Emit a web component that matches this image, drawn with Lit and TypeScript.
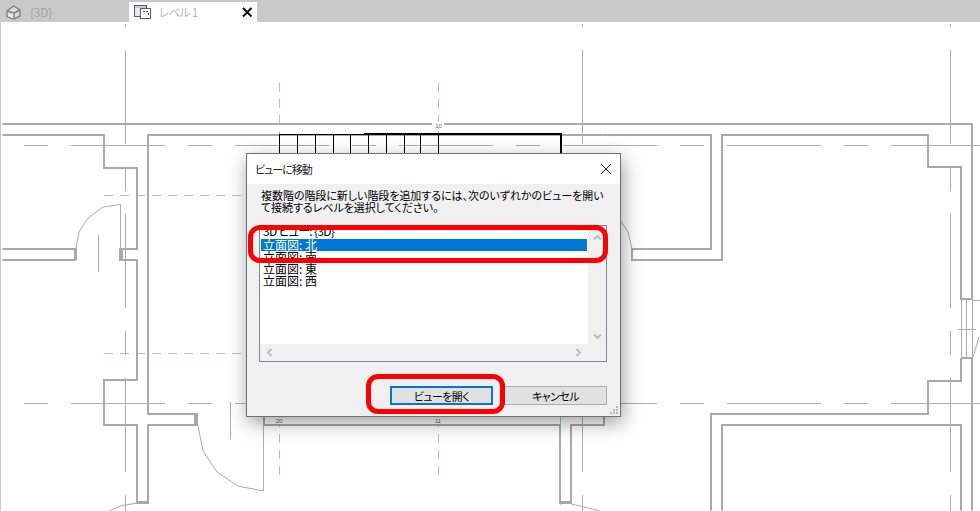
import { LitElement, html, css, svg } from "lit";
import { customElement } from "lit/decorators.js";

const walls = [
  "M3 124.5H972.5V299.5H961.5V167.5H928.5V135.5H722.5V260.5H632.5V249.5H711.5V135.5H603",
  "M3 135.5H104.5V168.5H137.5V249.5H120.5V260.5H137.5V380.5H104.5V425.5H137.5V503.5H148.5V425.5H197.5V414.5H148.5V135.5H603",
  "M3 249.5H75.5V260.5H3",
  "M961.5 358.5H972.5V511 M961.5 358.5V381.5H928.5V414.5H711.5V511",
  "M722.5 511V425.5H961.5V511",
  "M264.5 416V425.5H560.5V503.5H571.5V425.5H604.5V416",
];
const blocks = [
  [74, 248, 3, 12],
  [119, 248, 4, 12],
  [194, 413, 4, 12],
  [137, 501, 11, 3],
  [560, 501, 11, 3],
];
const grid = [
  "M23.5 145.5H980",
  "M23.5 403.5H980",
  "M125.5 24V511",
  "M582.5 24V511",
  "M950.5 24V511",
];
const thin = [
  "M120.5 204V248",
  "M98.5 235V272",
  "M230.5 402V439",
  "M263.5 416V491",
  "M961.5 300V358 M966.5 300V358 M972.5 300V358 M958 329.5H976 M972 300.5H980",
];
const curves = [
  "M120 204.5L103 207L88 218L79 232L76 248",
  "M198 426L203 451L217 472L238 486L263 491",
  "M137 503L120 506L109 511",
  "M571 504L585 507L600 511",
  "M620 220L628 232L632 249",
  "M979 337L973 357",
];
const greens = [
  "M279.5 83V135 M279.5 418V480",
  "M438.5 83V135 M438.5 418V480",
  "M560.5 416V505",
  "M104 195.5H250",
  "M104 353.5H250",
];
const treads = [279, 297, 315, 333, 350, 368, 386, 404, 420, 438, 560];

const Plan = () => svg`
  <svg class="plan" viewBox="0 22 980 489" width="980" height="489">
    <rect x="0" y="22" width="1" height="489" fill="#c8c8c8"></rect>
    <g fill="none" stroke="#aeaeae" stroke-width="1" shape-rendering="crispEdges">
      ${grid.slice(0, 2).map((d) => svg`<path d=${d} stroke-dasharray="24 23 94 23"></path>`)}
      ${grid.slice(2).map((d) => svg`<path d=${d} stroke-dasharray="24 23 94 23" stroke-dashoffset="21"></path>`)}
      ${thin.map((d) => svg`<path d=${d}></path>`)}
    </g>
    <g fill="none" stroke="#adc9ad" stroke-width="1" shape-rendering="crispEdges" stroke-dasharray="9 7">
      ${greens.map((d) => svg`<path d=${d}></path>`)}
    </g>
    <g fill="none" stroke="#a9a9a9" stroke-width="1">
      ${curves.map((d) => svg`<path d=${d}></path>`)}
    </g>
    <g fill="none" stroke="#a9a9a9" stroke-width="2" transform="translate(-0.5 -0.5)">
      ${walls.map((d) => svg`<path d=${d}></path>`)}
    </g>
    ${blocks.map(([x, y, w, h]) => svg`<rect x=${x} y=${y} width=${w} height=${h} fill="#a9a9a9"></rect>`)}
    <g fill="none" stroke="#000" stroke-width="1" shape-rendering="crispEdges">
      <path d="M279 134.5H560"></path>
      <path d="M364 133.5H561.5V160"></path>
      ${treads.map((x) => svg`<path d="M${x + 0.5} 134V160"></path>`)}
    </g>
    <g class="tag">
      <rect x="432" y="122" width="12" height="6" fill="#fff"></rect>
      <text x="438.5" y="127.5">10</text>
      <rect x="274" y="417" width="11" height="7" fill="#fff"></rect>
      <text x="279" y="423">20</text>
      <rect x="433" y="417" width="11" height="7" fill="#fff"></rect>
      <text x="438" y="423">11</text>
    </g>
  </svg>`;

@customElement("app-root")
export class AppRoot extends LitElement {
  static styles = css`
    :host {
      display: block;
      width: 980px;
      height: 511px;
      overflow: hidden;
      background: #fff;
      font-family: "Noto Sans CJK JP", "Noto Sans", sans-serif;
      font-feature-settings: "palt";
      color: #000;
    }
    .tabs {
      display: flex;
      align-items: flex-end;
      height: 22px;
      background: #c9c9c9;
    }
    .tab {
      display: flex;
      align-items: center;
      height: 20px;
      box-sizing: border-box;
      font-size: 11.5px;
      color: #a2a2a2;
    }
    .tab.idle {
      width: 129px;
      padding-left: 6px;
      gap: 9px;
    }
    .tab.on {
      width: 128px;
      padding-left: 5px;
      gap: 8px;
      background: #fff;
      color: #b4b4b4;
      letter-spacing: -0.6px;
    }
    .tab svg {
      display: block;
      flex: none;
    }
    .tab .x {
      margin-left: auto;
      margin-right: 4px;
    }
    .canvas {
      position: relative;
      height: 489px;
    }
    .plan {
      display: block;
    }
    .tag text {
      font-size: 6px;
      fill: #666;
      text-anchor: middle;
      font-family: "Liberation Sans", sans-serif;
    }
    .dialog {
      position: absolute;
      left: 246px;
      top: 131px;
      width: 375px;
      height: 264px;
      box-sizing: border-box;
      display: flex;
      flex-direction: column;
      border: 1px solid #6f6f6f;
      background: #f0f0f0;
      box-shadow: 2px 6px 18px rgba(0, 0, 0, 0.38);
    }
    .title {
      display: flex;
      align-items: center;
      justify-content: space-between;
      height: 30px;
      flex: none;
      padding: 0 8px;
      background: #fff;
      font-size: 11px;
      letter-spacing: -1px;
      color: #222;
    }
    .title svg {
      display: block;
    }
    .body {
      display: flex;
      flex-direction: column;
      flex: 1;
      padding: 5px 13px 0 12px;
    }
    .msg {
      margin: 0 0 12px 2px;
      font-size: 11px;
      line-height: 12px;
      height: 24px;
      letter-spacing: -0.05px;
      white-space: nowrap;
    }
    .list {
      display: grid;
      grid-template-columns: 1fr 18px;
      grid-template-rows: 1fr 17px;
      height: 137px;
      box-sizing: border-box;
      border: 1px solid #82878f;
      background: #f0f0f0;
    }
    .items {
      background: #fff;
      overflow: hidden;
      padding: 0 1px;
    }
    .item {
      height: 12px;
      line-height: 12px;
      padding-left: 2px;
      font-size: 12px;
      white-space: nowrap;
    }
    .item.first {
      height: 13px;
      line-height: 10px;
      letter-spacing: -0.7px;
    }
    .item.sel {
      background: #0078d7;
      color: #fff;
    }
    .vbar {
      display: flex;
      flex-direction: column;
      justify-content: space-between;
      align-items: center;
      padding: 7px 0 3px;
    }
    .hbar {
      display: flex;
      justify-content: space-between;
      align-items: center;
      padding: 0 5px;
    }
    .actions {
      display: flex;
      justify-content: flex-end;
      gap: 11px;
      margin-top: 24px;
    }
    .btn {
      width: 103px;
      height: 19px;
      box-sizing: border-box;
      display: flex;
      align-items: center;
      justify-content: center;
      border: 1px solid #adadad;
      background: #e1e1e1;
      font-size: 11px;
      letter-spacing: -0.6px;
    }
    .btn.primary {
      border: 2px solid #0078d7;
    }
    .grip {
      position: absolute;
      right: 1px;
      bottom: 1px;
      display: block;
    }
    .mark {
      position: absolute;
      box-sizing: border-box;
      border: 5px solid #f00;
      border-radius: 12px;
    }
    .mark.a {
      left: 248px;
      top: 203px;
      width: 360px;
      height: 38px;
    }
    .mark.b {
      left: 366px;
      top: 352px;
      width: 139px;
      height: 40px;
    }
  `;

  private chevron(d: string) {
    return html`<svg width="9" height="9" viewBox="0 0 9 9" fill="none" stroke="#bdbdbd" stroke-width="2"><path d=${d}></path></svg>`;
  }

  render() {
    return html`
      <div class="tabs">
        <div class="tab idle">
          <svg width="15" height="15" viewBox="0 0 15 15" fill="none" stroke="#828282" stroke-width="1.4">
            <path d="M1 6L7.5 1L14 5V11L8 14L1 11.5Z" fill="#dcdcdc"></path>
            <path d="M1 6L8 8V14M8 8L14 5"></path>
            <path d="M3.5 9V12M5.8 9.5V13" stroke="#f4f4f4" stroke-width="1.6"></path>
          </svg>
          <span>{3D}</span>
        </div>
        <div class="tab on">
          <svg width="17" height="14" viewBox="0 0 17 14" fill="none" stroke="#5c5c5c" stroke-width="1" shape-rendering="crispEdges">
            <rect x="0.5" y="0.5" width="12" height="11" fill="#e6eaf2"></rect>
            <path d="M1 1.5H12M1 2.5H12" stroke="#c5ccd8"></path>
            <rect x="6.5" y="3.5" width="10" height="10" fill="#fff"></rect>
            <path d="M9 6.5H14V11" stroke-dasharray="2 1" stroke="#444"></path>
          </svg>
          <span>レベル 1</span>
          <svg class="x" width="12" height="12" viewBox="0 0 12 12" fill="none" stroke="#111" stroke-width="2"><path d="M2 2L10.5 10.5M10.5 2L2 10.5"></path></svg>
        </div>
      </div>
      <div class="canvas">
        ${Plan()}
        <div class="dialog">
          <div class="title">
            <span>ビューに移動</span>
            <svg width="12" height="12" viewBox="0 0 12 12" fill="none" stroke="#222" stroke-width="1"><path d="M1 1L11 11M11 1L1 11"></path></svg>
          </div>
          <div class="body">
            <p class="msg">複数階の階段に新しい階段を追加するには、次のいずれかのビューを開い<br />て接続するレベルを選択してください。</p>
            <div class="list">
              <div class="items">
                <div class="item first">3D ビュー: {3D}</div>
                <div class="item sel">立面図: 北</div>
                <div class="item">立面図: 南</div>
                <div class="item">立面図: 東</div>
                <div class="item">立面図: 西</div>
              </div>
              <div class="vbar">
                ${this.chevron("M1 6.5L4.5 3L8 6.5")}
                ${this.chevron("M1 2.5L4.5 6L8 2.5")}
              </div>
              <div class="hbar">
                ${this.chevron("M6.5 1L3 4.5L6.5 8")}
                ${this.chevron("M2.5 1L6 4.5L2.5 8")}
              </div>
              <div></div>
            </div>
            <div class="actions">
              <div class="btn primary">ビューを開く</div>
              <div class="btn">キャンセル</div>
            </div>
          </div>
          <svg class="grip" width="10" height="10" viewBox="0 0 10 10" fill="#b8b8b8">
            <rect x="7" y="1" width="2" height="2"></rect>
            <rect x="4" y="4" width="2" height="2"></rect>
            <rect x="7" y="4" width="2" height="2"></rect>
            <rect x="1" y="7" width="2" height="2"></rect>
            <rect x="4" y="7" width="2" height="2"></rect>
            <rect x="7" y="7" width="2" height="2"></rect>
          </svg>
        </div>
        <div class="mark a"></div>
        <div class="mark b"></div>
      </div>
    `;
  }
}
